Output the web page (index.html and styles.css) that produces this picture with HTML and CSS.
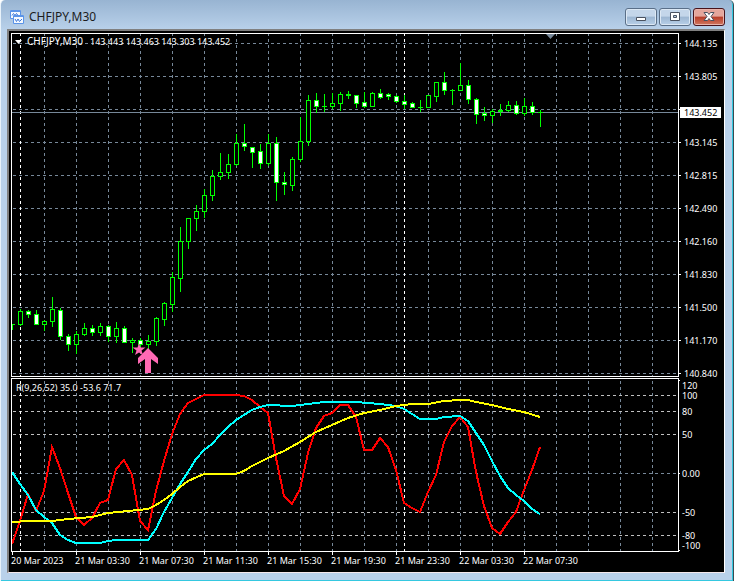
FILE: index.html
```html
<!DOCTYPE html>
<html lang="en">
<head>
<meta charset="utf-8">
<title>CHFJPY,M30</title>
<link rel="stylesheet" href="styles.css">
</head>
<body>
<div class="window">
  <header class="titlebar">
    <svg class="app-icon" viewBox="0 0 14 14" aria-hidden="true">
      <path class="icon-page" d="M.5.5h10v8H.5z"/>
      <path class="icon-bar" d="M1 0h9v2H1z"/>
      <path class="icon-line" d="M2 5.500l1.500-2 1.500 2 1.500-2 1.500 2"/>
      <path class="icon-page" d="M3.500 5.500h10v8h-10z"/>
      <path class="icon-bar" d="M4 5h9v2H4z"/>
      <path class="icon-line" d="M5 9l1.500 2.500L8 9l1.500 2.500L12 9"/>
    </svg>
    <h1 class="title">CHFJPY,M30</h1>
    <div class="controls">
      <button class="control" type="button" aria-label="Minimize">
        <svg viewBox="0 0 12 12"><path class="glyph" d="M1.500 6.500h9v3h-9z"/></svg>
      </button>
      <button class="control" type="button" aria-label="Maximize">
        <svg viewBox="0 0 12 12"><path class="glyph" fill-rule="evenodd" d="M1.500 1.500h9v8h-9zM4.500 4.500h3v2h-3z"/></svg>
      </button>
      <button class="control control-close" type="button" aria-label="Close">
        <svg viewBox="0 0 12 12"><path class="glyph" d="M1 1.500h3.500L6 3.500l1.500-2H11L8 5.500l3 4H7.500L6 7.500l-1.500 2H1l3-4z"/></svg>
      </button>
    </div>
  </header>
  <main class="client">
    <svg id="chart" class="chart" viewBox="9 31 715 541" role="img" aria-label="CHFJPY 30 minute chart"></svg>
  </main>
</div>
<script src="chart.js"></script>
</body>
</html>
```
FILE: styles.css
```css
* {
  box-sizing: border-box;
}

body {
  margin: 0;
  background: #fff;
  font-family: "Noto Sans", "Open Sans", sans-serif;
}

.window {
  display: flex;
  flex-direction: column;
  margin-right: 2px;
  padding: 0 8px 8px 6px;
  border-right: 1px solid #3c4a50;
  border-left: 1px solid #e8f2fa;
  border-radius: 5px 5px 0 0;
  background: linear-gradient(#98b4d2, #b9d1ea 30px);
  box-shadow: inset -1px -1px 0 #35c8e0;
}

.titlebar {
  display: flex;
  align-items: center;
  height: 29px;
  padding: 5px 0 0 3px;
}

.app-icon {
  width: 14px;
  height: 14px;
}

.icon-page {
  fill: #f4f9ff;
  stroke: #5b94e8;
}

.icon-bar {
  fill: #5b94e8;
}

.icon-line {
  fill: none;
  stroke: #3d78d8;
}

.title {
  margin: 0 0 0 5px;
  color: #1c1c1c;
  font-size: 12px;
  font-weight: 400;
  line-height: 16px;
}

.controls {
  display: flex;
  gap: 2px;
  margin-left: auto;
}

.control {
  display: flex;
  align-items: center;
  justify-content: center;
  width: 32px;
  height: 18px;
  padding: 0;
  border: 1px solid #5a6f88;
  border-radius: 3px;
  background: linear-gradient(#c4d6ea 0 45%, #9cb6d2 50%, #b8d0e8);
  box-shadow: inset 0 0 0 1px #dce8f4;
}

.control svg {
  width: 12px;
  height: 12px;
}

.control-close {
  border-color: #48141c;
  background: linear-gradient(#e4a69c 0 45%, #b83c28 50%, #d07860);
  box-shadow: inset 0 0 0 1px #e8b4ac;
}

.glyph {
  fill: #fff;
  stroke: #4a5260;
}

.client {
  border: 1px solid #fff;
  border-width: 2px 1px 1px 2px;
  border-top-color: #808080;
  border-left-color: #808080;
  border-bottom-color: #f4e8ec;
  background: #000;
}

.chart {
  display: block;
  width: 100%;
  height: auto;
  background: #000;
}

.frame,
.grid,
.levels,
.session,
.price-line,
.indicator,
.wick,
.body-up,
.body-down {
  fill: none;
  shape-rendering: crispEdges;
}

.grid {
  stroke: #778899;
  stroke-dasharray: 3;
}

.levels {
  stroke: #c0c0c0;
  stroke-dasharray: 3;
}

.session {
  stroke: #fff;
  stroke-dasharray: 3;
}

.frame {
  stroke: #fff;
}

.price-line {
  stroke: #778899;
}

.wick {
  stroke: #0f0;
}

.body-up {
  fill: #000;
  stroke: #0f0;
}

.body-down {
  fill: #fff;
  stroke: #0f0;
}

.indicator {
  stroke-width: 2;
}

.fast {
  stroke: #f00;
}

.medium {
  stroke: #0ff;
}

.slow {
  stroke: #ff0;
}

.signal {
  fill: #ff69b4;
}

.shift-marker {
  fill: #778899;
}

.menu-marker,
.tag {
  fill: #fff;
}

.label {
  fill: #fff;
  font-size: 9px;
}

.symbol {
  font-size: 10px;
}

.tag-label {
  fill: #000;
}
```
FILE: chart.js
```js
const chart = document.getElementById('chart');

function add(name, attrs, text) {
  const el = document.createElementNS('http://www.w3.org/2000/svg', name);
  for (const key in attrs) el.setAttribute(key, attrs[key]);
  if (text) el.textContent = text;
  chart.appendChild(el);
}

const path = (cls, d) => add('path', { class: cls, d });
const label = (x, y, text, cls = 'label') => add('text', { class: cls, x, y }, text);
const across = y => `M13 ${y + 0.5}H678`;
const down = x => `M${x + 0.5} 33V376M${x + 0.5} 381V551`;

const prices = ['144.135', '143.805', '143.475', '143.145', '142.815', '142.490',
  '142.160', '141.830', '141.500', '141.170', '140.840'];

let grid = across(473);
prices.forEach((p, i) => { grid += across(43 + 33 * i); });
for (let x = 44; x < 678; x += 32) grid += down(x);
path('grid', grid);
path('levels', [395, 411, 434, 512, 535].map(across).join(''));
path('session', down(20) + down(404));
path('price-line', 'M11 112.5H678');

// x, high, low, body top, body bottom; a fall closes below its open
const rises = [
  [12, 324, 329, 324, 324], [20, 309, 325, 311, 324], [44, 320, 330, 321, 324],
  [52, 297, 326, 309, 321], [76, 331, 353, 334, 344], [84, 323, 335, 328, 334],
  [100, 323, 335, 326, 332], [116, 322, 342, 328, 336], [132, 338, 352, 340, 342],
  [148, 335, 348, 341, 344], [156, 317, 345, 318, 341], [164, 302, 325, 303, 319],
  [172, 272, 311, 277, 304], [180, 227, 291, 241, 278], [188, 218, 248, 218, 241],
  [196, 205, 230, 211, 218], [204, 189, 217, 195, 211], [212, 170, 200, 176, 195],
  [220, 153, 179, 172, 176], [228, 154, 178, 164, 172], [236, 134, 165, 143, 164],
  [268, 134, 165, 143, 163], [292, 157, 190, 159, 185], [300, 117, 161, 141, 159],
  [308, 95, 145, 100, 141], [324, 94, 111, 106, 106], [332, 93, 108, 103, 106],
  [340, 92, 110, 94, 103], [348, 91, 98, 94, 95], [372, 92, 106, 93, 106],
  [420, 100, 111, 107, 107], [428, 95, 107, 95, 107], [436, 82, 101, 82, 96],
  [452, 89, 104, 90, 90], [460, 63, 90, 85, 90], [492, 109, 122, 111, 115],
  [500, 104, 115, 110, 111], [508, 101, 111, 105, 110], [524, 98, 115, 106, 113],
  [540, 110, 126, 112, 112]
];
const falls = [
  [28, 310, 317, 311, 314], [36, 310, 324, 314, 324], [60, 308, 339, 310, 336],
  [68, 334, 350, 336, 344], [92, 325, 335, 328, 332], [108, 325, 341, 326, 336],
  [124, 326, 342, 328, 342], [140, 338, 346, 340, 344], [244, 124, 150, 143, 146],
  [252, 147, 167, 147, 152], [260, 144, 168, 151, 163], [276, 137, 200, 143, 182],
  [284, 172, 194, 182, 184], [316, 93, 112, 100, 106], [356, 95, 107, 95, 103],
  [364, 92, 107, 102, 106], [380, 89, 98, 93, 97], [388, 93, 99, 94, 96],
  [396, 95, 102, 96, 101], [404, 95, 108, 101, 104], [412, 102, 107, 103, 107],
  [444, 72, 94, 82, 90], [468, 80, 103, 85, 99], [476, 98, 123, 99, 114],
  [484, 107, 120, 113, 115], [516, 101, 114, 105, 113], [532, 102, 114, 106, 112]
];
const wick = ([x, high, low]) => `M${x + 0.5} ${high}V${low + 1}`;
const body = ([x, , , top, bottom]) => {
  const left = Math.max(x - 2, 12);
  return top === bottom
    ? `M${left} ${top + 0.5}H${x + 3}`
    : `M${left + 0.5} ${top + 0.5}H${x + 2.5}V${bottom + 0.5}H${left + 0.5}Z`;
};
path('wick', rises.concat(falls).map(wick).join(''));
path('body-up', rises.map(body).join(''));
path('body-down', falls.map(body).join(''));

path('signal', 'M139 343l1.500 4.500h5l-4 3 1.500 4.500-4-2.500-4 2.500 1.500-4.500-4-3h5z');
path('signal', 'M148 348l10 10v6l-7-5v14h-6v-14l-7 5v-6z');

const series = {
  fast: '12,544 20,521 28,494 36,511 44,491 52,447 60,468 68,493 76,517 84,525 92,518 100,503 108,500 116,469 124,460 132,475 140,521 148,530 156,491 164,461 172,434 180,414 188,403 196,399 204,395 236,395 244,396 252,400 260,407 268,413 276,458 284,496 292,504 300,489 308,453 316,428 324,416 332,413 340,405 348,405 356,417 364,450 372,450 380,438 388,447 396,470 404,503 412,508 420,512 428,492 436,475 444,442 452,426 460,417 468,427 476,472 484,506 492,528 500,534 508,522 516,512 524,490 532,470 540,447',
  medium: '12,472 20,484 28,495 36,510 44,517 52,523 60,535 68,540 76,543 100,543 108,541 116,540 148,540 156,529 164,512 172,498 180,484 188,472 196,459 204,450 212,444 220,435 228,427 236,420 244,415 252,410 260,407 268,405 292,406 308,404 324,402 356,402 380,404 396,406 404,409 412,414 420,419 436,419 444,417 460,416 468,421 476,433 484,445 492,461 500,476 508,488 516,495 524,501 532,509 540,514',
  slow: '12,522 28,521 52,521 68,519 92,517 108,513 148,509 156,505 164,500 172,494 180,487 188,481 204,474 236,474 244,471 252,466 268,458 284,451 300,442 316,432 332,425 348,418 364,413 380,410 396,406 412,404 428,404 444,401 460,400 468,400 476,402 492,405 508,409 524,412 540,417'
};
for (const name in series) {
  add('polyline', { class: `indicator ${name}`, points: series[name] });
}

let frame = 'M11.5 33.5H678.5V376.5H11.5ZM11.5 378.5H678.5V551.5H11.5Z';
prices.forEach((p, i) => { frame += `M679 ${43.5 + 33 * i}h2`; });
frame += 'M679 380.5h1M679 473.5h1M679 550.5h1';
for (let x = 12; x < 530; x += 64) frame += `M${x + 0.5} 552v3`;
path('frame', frame);

path('shift-marker', 'M546 34h9l-4.500 5z');
path('menu-marker', 'M15 40h7l-3.500 4z');
label(27, 45, 'CHFJPY,M30', 'label symbol');
label(90, 45, '143.443 143.463 143.303 143.452');
label(16, 391, 'R(9,26,52) 35.0 -53.6 71.7');

prices.forEach((p, i) => { if (i !== 2) label(684, 47 + 33 * i, p); });
add('rect', { class: 'tag', x: 680, y: 107, width: 41, height: 11 });
label(684, 116, '143.452', 'label tag-label');

[['120', 389], ['100', 399], ['80', 415], ['50', 438], ['0.00', 477],
  ['-50', 516], ['-80', 539], ['-100', 549]].forEach(([text, y]) => label(682, y, text));

['20 Mar 2023', '21 Mar 03:30', '21 Mar 07:30', '21 Mar 11:30', '21 Mar 15:30',
  '21 Mar 19:30', '21 Mar 23:30', '22 Mar 03:30', '22 Mar 07:30']
  .forEach((text, i) => label(11 + 64 * i, 564, text));
```
